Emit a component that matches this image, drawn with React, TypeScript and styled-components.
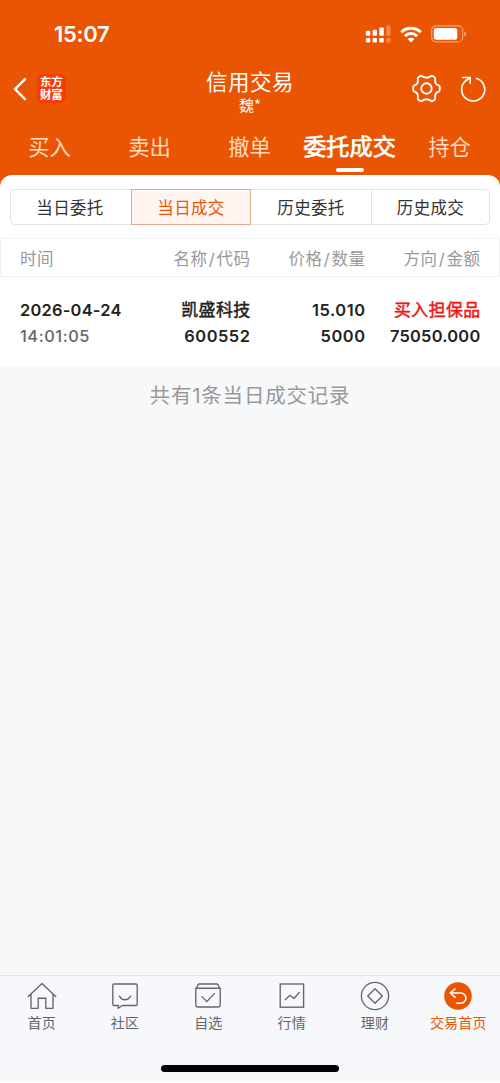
import React from "react";
import styled, { createGlobalStyle } from "styled-components";

const ORANGE = "#ea5504";

const GlobalStyle = createGlobalStyle`
  * { box-sizing: border-box; }
  body {
    margin: 0;
    background: #fff;
    font-family: Inter, "Noto Sans CJK SC", sans-serif;
    color: #222;
  }
`;

const Screen = styled.div`
  display: flex;
  flex-direction: column;
  width: 500px;
  height: 1082px;
  background: #f7f8fa;
  overflow: hidden;
`;

const Header = styled.header`
  height: 187px;
  flex: none;
  background: ${ORANGE};
  color: #fff;
`;

const StatusBar = styled.div`
  display: flex;
  justify-content: space-between;
  align-items: center;
  height: 68px;
  padding: 0 33px 0 54px;
`;

const Clock = styled.span`
  font-size: 22px;
  font-weight: 600;
  line-height: 24px;
  letter-spacing: -0.3px;
`;

const StatusIcons = styled.div`
  display: flex;
  align-items: center;
  gap: 9px;
  svg { display: block; }
`;

const NavBar = styled.div`
  display: grid;
  grid-template-columns: 100px 1fr 100px;
  height: 52px;
`;

const NavLeft = styled.div`
  display: flex;
  align-items: center;
  padding: 0 0 11px 13px;
  gap: 10px;
`;

const Logo = styled.div`
  width: 29px;
  height: 29px;
  padding: 1px 2px 0 3px;
  border-radius: 5px;
  background: #fa3a08;
  font: 700 11.5px/13px "Noto Sans CJK SC", sans-serif;
  letter-spacing: -0.2px;
  word-break: break-all;
`;

const NavTitle = styled.div`
  display: flex;
  flex-direction: column;
  align-items: center;
`;

const Title = styled.h1`
  margin: 0;
  font-size: 21.5px;
  font-weight: 400;
  line-height: 28px;
  letter-spacing: 0.5px;
`;

const Account = styled.span`
  font-family: "Noto Sans CJK SC", sans-serif;
  font-size: 15px;
  line-height: 18px;
`;

const NavRight = styled.div`
  display: flex;
  align-items: center;
  justify-content: flex-end;
  padding: 0 14px 11px 0;
  gap: 19px;
`;

const Tabs = styled.nav`
  display: grid;
  grid-template-columns: repeat(5, 1fr);
  height: 55px;
`;

const TabItem = styled.div<{ $active?: boolean }>`
  display: flex;
  flex-direction: column;
  align-items: center;
  padding-top: 10px;
  white-space: nowrap;
  font-size: ${(p) => (p.$active ? "23.2px" : "21.3px")};
  -webkit-text-stroke: ${(p) => (p.$active ? "0.7px #fff" : "0")};
  line-height: 34px;
  color: ${(p) => (p.$active ? "#fff" : "#ffd9bd")};
  span { margin-right: 1px; }
  &::after {
    content: "";
    width: 28px;
    height: 4px;
    margin-top: 4px;
    border-radius: 2px;
    background: ${(p) => (p.$active ? "#fff" : "transparent")};
  }
`;

const Panel = styled.section`
  margin-top: -12px;
  flex: none;
  height: 191px;
  background: #fff;
  border-radius: 12px 12px 0 0;
  padding-top: 14px;
`;

const Segments = styled.div`
  display: grid;
  grid-template-columns: 120px 120px 120px 118px;
  height: 36px;
  margin: 0 10px;
  border: 1px solid #e3e3e3;
  border-radius: 5px;
`;

const Segment = styled.div<{ $active?: boolean }>`
  display: flex;
  align-items: center;
  justify-content: center;
  margin: ${(p) => (p.$active ? "-1px 0" : "0")};
  border: ${(p) => (p.$active ? "1px solid #e5aa90" : "0 solid #e3e3e3")};
  background: ${(p) => (p.$active ? "#fff5f1" : "transparent")};
  color: ${(p) => (p.$active ? ORANGE : "#333")};
  font-size: 16.5px;
  letter-spacing: 0.35px;
  &:first-child { padding-right: 2px; }
  &:last-child { border-left-width: 1px; }
`;

const Row = styled.div`
  display: grid;
  grid-template-columns: 130.5px 100px 115px 115px;
  padding: 0 19px 0 20px;
`;

const HeadRow = styled(Row)`
  height: 39px;
  margin-top: 13px;
  border: 1px solid #f0f1f3;
  padding: 0 18px 0 19px;
  align-items: center;
  color: #999;
  font-size: 16.5px;
`;

const DataRow = styled(Row)`
  padding-top: 20px;
  font-size: 16.4px;
  font-weight: 600;
  line-height: 26px;
`;

const Cell = styled.div<{ $left?: boolean }>`
  display: flex;
  flex-direction: column;
  align-items: ${(p) => (p.$left ? "flex-start" : "flex-end")};
  white-space: nowrap;
  letter-spacing: 0.45px;
`;

const Value = styled.span<{ $tone?: string; $medium?: boolean; $wide?: boolean }>`
  color: ${(p) => p.$tone ?? "#222"};
  font-weight: ${(p) => (p.$medium ? 500 : 600)};
  letter-spacing: ${(p) => (p.$wide ? "0.55px" : "0.25px")};
`;

/* Chinese values sit between the regular and bold weights of the font. */
const ChineseValue = styled(Value)`
  font-size: 16.9px;
  font-weight: 400;
  -webkit-text-stroke: 0.5px currentColor;
  letter-spacing: 0.4px;
`;

const Slash = styled.span`
  padding: 0 1.4px;
`;

const Summary = styled.p`
  margin: 14px 0 0;
  flex: 1;
  text-align: center;
  color: #999;
  font-size: 20.5px;
  line-height: 32px;
  letter-spacing: 0.8px;
`;

const BottomBar = styled.nav`
  display: grid;
  grid-template-columns: repeat(6, 1fr);
  flex: none;
  height: 90px;
  border-top: 1px solid #e4e6ea;
  background: #f7f8fb;
`;

const BottomItem = styled.div<{ $active?: boolean }>`
  display: flex;
  flex-direction: column;
  align-items: center;
  padding-top: 5px;
  font-size: 14px;
  line-height: 20px;
  letter-spacing: 0.2px;
  color: ${(p) => (p.$active ? ORANGE : "#666")};
  svg { display: block; margin-bottom: 2px; }
`;

const HomeIndicator = styled.div`
  flex: none;
  width: 178px;
  height: 7px;
  margin: 0 auto 10px;
  border-radius: 4px;
  background: #000;
`;

const Signal = () => (
  <svg width="26" height="18" viewBox="0 0 26 18" fill="#fff">
    <rect x="0.8" y="5.7" width="4.4" height="5" rx="1" />
    <rect x="7.6" y="4.7" width="4.4" height="6" rx="1" />
    <rect x="14.4" y="2.5" width="4.4" height="8.2" rx="1" />
    <rect x="21.2" y="0.5" width="4.4" height="10.2" rx="1" opacity=".3" />
    <rect x="0.8" y="13" width="4.4" height="4.4" rx="1" />
    <rect x="7.6" y="13" width="4.4" height="4.4" rx="1" />
    <rect x="14.4" y="13" width="4.4" height="4.4" rx="1" />
    <rect x="21.2" y="13" width="4.4" height="4.4" rx="1" opacity=".3" />
  </svg>
);

const Wifi = () => (
  <svg width="22" height="17" viewBox="0 0 22 17" fill="none" stroke="#fff" strokeWidth="3">
    <path d="M1.2 6.2A14 14 0 0 1 20.8 6.2" />
    <path d="M4.8 10.1A9 9 0 0 1 17.2 10.1" />
    <path d="M11 16.5 7.6 13A4.9 4.9 0 0 1 14.4 13Z" fill="#fff" stroke="none" />
  </svg>
);

const Battery = () => (
  <svg width="36" height="18" viewBox="0 0 36 18">
    <rect x=".7" y=".9" width="31" height="16" rx="4.5" fill="none" stroke="#fff" strokeOpacity=".45" strokeWidth="1.2" />
    <rect x="2.8" y="3" width="23.5" height="11.8" rx="2.5" fill="#fff" />
    <path d="M33.2 6.5q2 .6 2 2.4t-2 2.4z" fill="#fff" fillOpacity=".5" />
  </svg>
);

const Back = () => (
  <svg width="14" height="24" viewBox="0 0 14 24" fill="none" stroke="#fff" strokeWidth="2.4" strokeLinecap="round" strokeLinejoin="round">
    <path d="M12 2.2 2 12.2 12 22.2" />
  </svg>
);

const Gear = () => (
  <svg width="29" height="29" viewBox="0 0 30 30" fill="none" stroke="#fff" strokeWidth="1.9" strokeLinejoin="round">
    <path d="M8.2 2.3Q9.2 1.5 10.3 2.2C13.3 4.3 16.7 4.3 19.7 2.2Q20.8 1.5 21.8 2.3L23.3 3.3Q24.3 4 24 5.2C23.4 8.8 24.6 10.8 27.5 11.8Q28.7 12.3 28.7 13.5V16.5Q28.7 17.7 27.5 18.2C24.6 19.2 23.4 21.2 24 24.8Q24.3 26 23.3 26.7L21.8 27.7Q20.8 28.5 19.7 27.8C16.7 25.7 13.3 25.7 10.3 27.8Q9.2 28.5 8.2 27.7L6.7 26.7Q5.7 26 6 24.8C6.6 21.2 5.4 19.2 2.5 18.2Q1.3 17.7 1.3 16.5V13.5Q1.3 12.3 2.5 11.8C5.4 10.8 6.6 8.8 6 5.2Q5.7 4 6.7 3.3Z" />
    <circle cx="15" cy="15" r="5.4" />
  </svg>
);

const Refresh = () => (
  <svg width="26" height="26" viewBox="0 0 27 27" fill="none" stroke="#fff" strokeWidth="1.7">
    <path d="M16.6 2.4A12 12 0 1 1 5.6 5.2L10.2 2" />
    <path d="M2 1.6H10.6V8" />
  </svg>
);

const iconProps = {
  width: 30,
  height: 30,
  viewBox: "0 0 30 30",
  fill: "none",
  stroke: "#666",
  strokeWidth: 1.35,
  strokeLinejoin: "round" as const,
  strokeLinecap: "round" as const,
};

const HomeIcon = () => (
  <svg {...iconProps}>
    <path d="M1.3 15.6 15 2.6 28.7 15.6M4 13.4V27.3H11.2V17.2H18.8V27.3H26V13.4" />
  </svg>
);

const CommunityIcon = () => (
  <svg {...iconProps}>
    <path d="M4 3H26Q27.2 3 27.2 4.2V23.3Q27.2 24.5 26 24.5H12.3L8.2 27.3V24.5H4Q2.8 24.5 2.8 23.3V4.2Q2.8 3 4 3Z" />
    <path d="M9.5 15.1C12 20 18 20 20.5 15.1" />
  </svg>
);

const WatchIcon = () => (
  <svg {...iconProps}>
    <path d="M2.8 8.2 5.1 3.8Q5.5 3 6.4 3H23.6Q24.5 3 24.9 3.8L27.2 8.2M2.8 7.2H27.2V24.6Q27.2 26 25.8 26H4.2Q2.8 26 2.8 24.6Z" />
    <path d="m9 15.6 4.8 5 7.8-8.2" />
  </svg>
);

const MarketIcon = () => (
  <svg {...iconProps} strokeLinejoin="miter">
    <rect x="3.2" y="3" width="23.4" height="23.2" />
    <path d="m8.2 18.7 4.8-4.4 4 3.2 5.2-6" />
  </svg>
);

const WealthIcon = () => (
  <svg {...iconProps}>
    <circle cx="15" cy="15" r="13.6" />
    <path d="M15 7.8 22.3 15 15 22.3 7.7 15Z" />
  </svg>
);

const TradeIcon = () => (
  <svg {...iconProps} stroke="#fff" strokeWidth="1.6">
    <circle cx="15" cy="15" r="13.8" fill={ORANGE} stroke="none" />
    <path d="M12 8 7.2 12 12 16.2M7.4 12H17.8A5.1 5.1 0 0 1 17.8 22.2H13.6" />
  </svg>
);

const TABS = ["买入", "卖出", "撤单", "委托成交", "持仓"];
const SEGMENTS = ["当日委托", "当日成交", "历史委托", "历史成交"];
const COLUMNS = [["名称", "代码"], ["价格", "数量"], ["方向", "金额"]];
const BOTTOM = [
  { label: "首页", Icon: HomeIcon },
  { label: "社区", Icon: CommunityIcon },
  { label: "自选", Icon: WatchIcon },
  { label: "行情", Icon: MarketIcon },
  { label: "理财", Icon: WealthIcon },
  { label: "交易首页", Icon: TradeIcon },
];

export default function App() {
  return (
    <>
      <GlobalStyle />
      <Screen>
        <Header>
          <StatusBar>
            <Clock>15:07</Clock>
            <StatusIcons><Signal /><Wifi /><Battery /></StatusIcons>
          </StatusBar>
          <NavBar>
            <NavLeft>
              <Back />
              <Logo>东方财富</Logo>
            </NavLeft>
            <NavTitle>
              <Title>信用交易</Title>
              <Account>魏*</Account>
            </NavTitle>
            <NavRight><Gear /><Refresh /></NavRight>
          </NavBar>
          <Tabs>
            {TABS.map((t) => <TabItem key={t} $active={t === "委托成交"}><span>{t}</span></TabItem>)}
          </Tabs>
        </Header>
        <Panel>
          <Segments>
            {SEGMENTS.map((s) => <Segment key={s} $active={s === "当日成交"}>{s}</Segment>)}
          </Segments>
          <HeadRow>
            <Cell $left>时间</Cell>
            {COLUMNS.map(([a, b]) => (
              <Cell key={a}><span>{a}<Slash>/</Slash>{b}</span></Cell>
            ))}
          </HeadRow>
          <DataRow>
            <Cell $left>
              <Value>2026-04-24</Value>
              <Value $tone="#666" $medium $wide>14:01:05</Value>
            </Cell>
            <Cell><ChineseValue>凯盛科技</ChineseValue><Value $wide>600552</Value></Cell>
            <Cell><Value $wide>15.010</Value><Value $wide>5000</Value></Cell>
            <Cell><ChineseValue $tone="#f01818">买入担保品</ChineseValue><Value>75050.000</Value></Cell>
          </DataRow>
        </Panel>
        <Summary>共有1条当日成交记录</Summary>
        <BottomBar>
          {BOTTOM.map(({ label, Icon }) => (
            <BottomItem key={label} $active={label === "交易首页"}>
              <Icon />
              <span>{label}</span>
            </BottomItem>
          ))}
        </BottomBar>
        <HomeIndicator />
      </Screen>
    </>
  );
}
